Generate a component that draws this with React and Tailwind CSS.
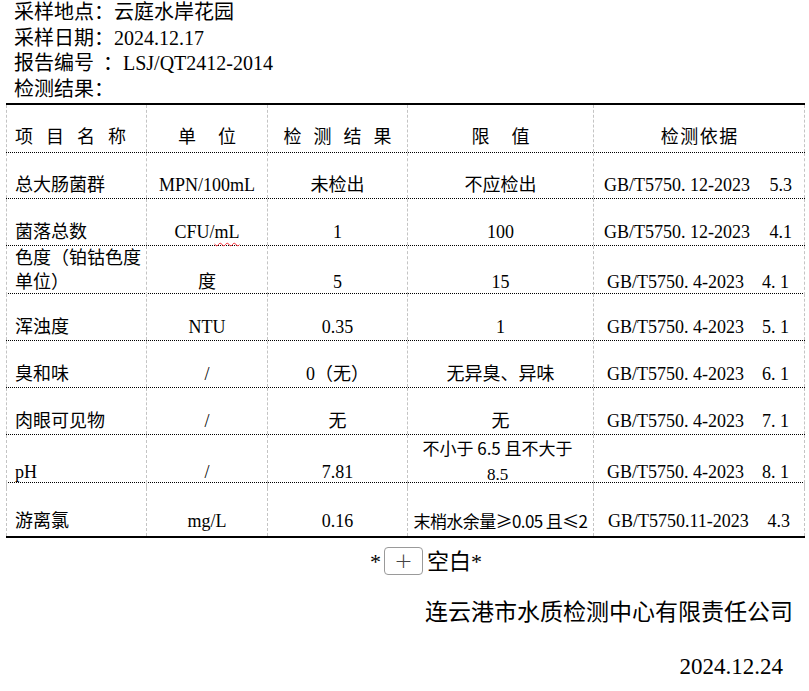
import React from 'react';

const serif = "font-['Liberation_Serif','Noto_Sans_CJK_SC',serif]";

const rows = [
  { name: '总大肠菌群', unit: 'MPN/100mL', result: '未检出', limit: '不应检出', std: 'GB/T5750. 12-2023', clause: '5.3', h: 'h-[46px]', pad: 'pb-[1px]', sp: 'pl-[10px] pr-[12px]' },
  { name: '菌落总数', unit: 'CFU/mL', result: '1', limit: '100', std: 'GB/T5750. 12-2023', clause: '4.1', h: 'h-[47px]', pad: 'pb-[1px]', sp: 'pl-[10px] pr-[12px]' },
  { name: '色度（铂钴色度', name2: '单位）', unit: '度', result: '5', limit: '15', std: 'GB/T5750. 4-2023', clause: '4. 1', h: 'h-[48px]', pad: 'pb-[1px]', sp: 'pl-[13px] pr-[15px]' },
  { name: '浑浊度', unit: 'NTU', result: '0.35', limit: '1', std: 'GB/T5750. 4-2023', clause: '5. 1', h: 'h-[47px]', pad: 'pb-[1px]', sp: 'pl-[13px] pr-[15px]' },
  { name: '臭和味', unit: '/', result: '0（无）', limit: '无异臭、异味', std: 'GB/T5750. 4-2023', clause: '6. 1', h: 'h-[47px]', pad: 'pb-[1px]', sp: 'pl-[13px] pr-[15px]' },
  { name: '肉眼可见物', unit: '/', result: '无', limit: '无', std: 'GB/T5750. 4-2023', clause: '7. 1', h: 'h-[47px]', pad: 'pb-[1px]', sp: 'pl-[13px] pr-[15px]' },
  { name: 'pH', unit: '/', result: '7.81', limit: '不小于 6.5 且不大于', limit2: '8.5', std: 'GB/T5750. 4-2023', clause: '8. 1', h: 'h-[48px]', pad: 'pb-[4px]', sp: 'pl-[13px] pr-[15px]' },
  { name: '游离氯', unit: 'mg/L', result: '0.16', limit: '末梢水余量≥0.05 且≤2', std: 'GB/T5750.11-2023', clause: '4.3', h: 'h-[53px]', pad: 'pb-[3px]', sp: 'pl-[14px] pr-[14px]', last: true },
];

const cell = 'flex border-l border-dashed border-[#c4c4c4]';

function Row({ r }) {
  return (
    <div className={`grid grid-cols-[140px_121px_140px_186px_212px] ${r.h} ${r.last ? '' : 'border-b border-dotted border-black'}`}>
      <div className={`${cell} items-end pl-[8px] ${r.pad}`}>
        <div>
          {r.name}
          {r.name2 && (
            <>
              <br />
              {r.name2}
            </>
          )}
        </div>
      </div>
      <div className={`${cell} items-end justify-center ${r.pad}`}>
        {r.unit === 'CFU/mL' ? (
          <span>
            CFU/<span className="underline decoration-wavy decoration-red-500 decoration-1 underline-offset-[4px]">mL</span>
          </span>
        ) : (
          <span>{r.unit}</span>
        )}
      </div>
      <div className={`${cell} items-end justify-center ${r.pad}`}>
        <span>{r.result}</span>
      </div>
      <div className={`${cell} items-end justify-center ${r.limit2 ? 'pb-[1px]' : r.pad}`}>
        {r.limit2 ? (
          <div className="pr-[6px] text-center leading-[25px] font-['Noto_Sans_CJK_SC',sans-serif] text-[17px]">
            {r.limit}
            <br />
            <span className={serif}>{r.limit2}</span>
          </div>
        ) : r.last ? (
          <span className="whitespace-nowrap font-['Noto_Sans_CJK_SC',sans-serif] text-[17px] tracking-[-0.6px]">{r.limit}</span>
        ) : (
          <span>{r.limit}</span>
        )}
      </div>
      <div className={`${cell} border-r items-end justify-between ${r.sp} ${r.pad}`}>
        <span>{r.std}</span>
        <span>{r.clause}</span>
      </div>
    </div>
  );
}

export default function App() {
  return (
    <div className={`w-[809px] h-[691px] bg-white text-black ${serif}`}>
      {/* header info */}
      <div className="pl-[14px] text-[20px] leading-[25.5px]">
        <div>采样地点：云庭水岸花园</div>
        <div>采样日期：2024.12.17</div>
        <div>
          报告编号<span className="ml-[9px]">：</span>LSJ/QT2412-2014
        </div>
        <div>检测结果：</div>
      </div>

      {/* table */}
      <div className="ml-[6px] mt-[1px] w-[799px] border-t-2 border-b-2 border-black text-[18px] leading-[24px]">
        <div className="grid grid-cols-[140px_121px_140px_186px_212px] h-[48px] border-b border-dotted border-black">
          <div className={`${cell} items-end pl-[8px] pb-[3px]`}>
            <div className="flex gap-[13px]">
              <span>项</span><span>目</span><span>名</span><span>称</span>
            </div>
          </div>
          <div className={`${cell} items-end justify-center pb-[3px]`}>
            <div className="flex gap-[22px]">
              <span>单</span><span>位</span>
            </div>
          </div>
          <div className={`${cell} items-end justify-center pb-[3px]`}>
            <div className="flex gap-[12px]">
              <span>检</span><span>测</span><span>结</span><span>果</span>
            </div>
          </div>
          <div className={`${cell} items-end justify-center pb-[3px]`}>
            <div className="flex gap-[22px]">
              <span>限</span><span>值</span>
            </div>
          </div>
          <div className={`${cell} border-r items-end justify-center pb-[3px]`}>
            <div className="flex gap-[1.5px]">
              <span>检</span><span>测</span><span>依</span><span>据</span>
            </div>
          </div>
        </div>
        {rows.map((r) => (
          <Row key={r.name} r={r} />
        ))}
      </div>

      {/* blank marker */}
      <div className="mt-[8px] flex items-center pl-[370px] h-[30px] text-[22px]">
        <span>*</span>
        <span className="ml-[3px] mr-[4px] flex h-[28px] w-[39px] items-center justify-center rounded-[4px] border border-[#9a9a9a] bg-white text-[22px] leading-none text-[#444] font-['DejaVu_Sans',sans-serif] font-light">
          +
        </span>
        <span>空白*</span>
      </div>

      {/* footer */}
      <div className="mt-[22px] pr-[16px] text-right text-[23px] leading-[30px]">
        连云港市水质检测中心有限责任公司
      </div>
      <div className="mt-[24px] pr-[26px] text-right text-[23px] leading-[30px]">2024.12.24</div>
    </div>
  );
}
